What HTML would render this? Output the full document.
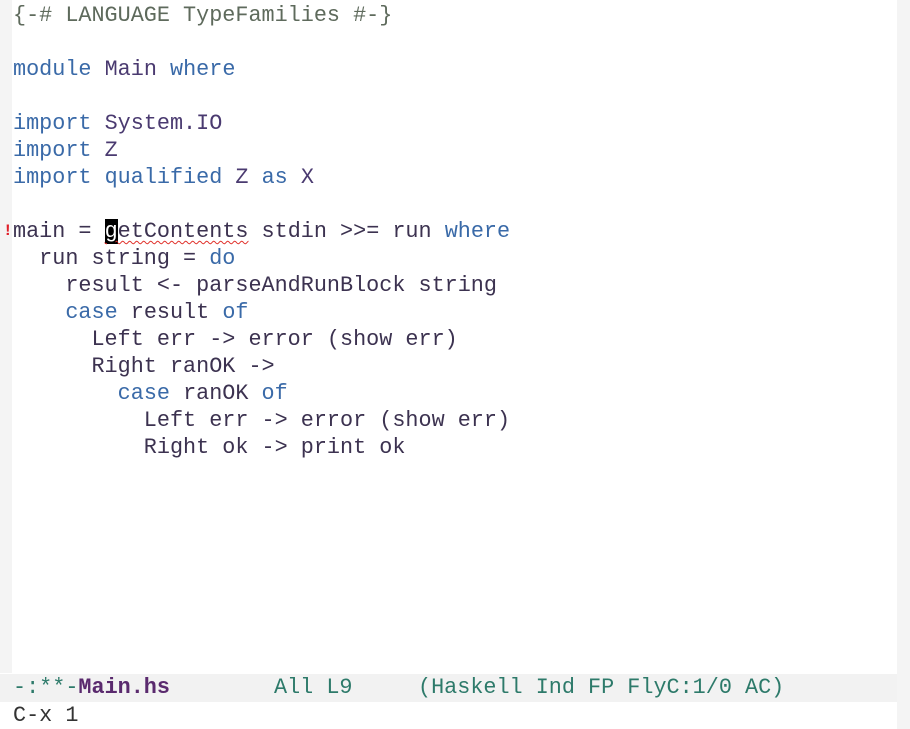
<!DOCTYPE html>
<html><head><style>
html,body{margin:0;padding:0;width:910px;height:729px;background:#fff;overflow:hidden}
body{position:relative;font-family:"Liberation Mono",monospace;font-size:21.8px;line-height:27px;color:#3c3250}
.fl{position:absolute;top:0;left:0;width:12px;height:673px;background:#f4f4f4}
.fr{position:absolute;top:0;left:897px;width:13px;height:729px;background:#f4f4f4}
pre{margin:0;font:inherit;position:absolute;left:13px;top:2px;white-space:pre}
.k{color:#3a6aa8}.p{color:#5e6a5c}.m{color:#4a3a70}
.cur{background:#000;color:#fff}
.sq{text-decoration:underline wavy #e0302a;text-decoration-thickness:1px;text-underline-offset:3px}
.bang{position:absolute;left:3px;top:218px;color:#e0202a;font-size:16px;font-weight:bold}
.ml{position:absolute;left:0;top:674px;width:897px;height:28px;background:#f2f2f2;color:#2d7a6a;line-height:28px}
.ml span{position:absolute}
.ea{position:absolute;left:13px;top:702px;line-height:27px;color:#333}
</style></head><body>
<div class="fl"></div><div class="fr"></div>
<div class="bang">!</div>
<pre><span class="p">{-# LANGUAGE TypeFamilies #-}</span>

<span class="k">module</span> <span class="m">Main</span> <span class="k">where</span>

<span class="k">import</span> <span class="m">System.IO</span>
<span class="k">import</span> <span class="m">Z</span>
<span class="k">import</span> <span class="k">qualified</span> <span class="m">Z</span> <span class="k">as</span> <span class="m">X</span>

main = <span class="sq"><span class="cur">g</span>etContents</span> stdin &gt;&gt;= run <span class="k">where</span>
  run string = <span class="k">do</span>
    result &lt;- parseAndRunBlock string
    <span class="k">case</span> result <span class="k">of</span>
      Left err -&gt; error (show err)
      Right ranOK -&gt;
        <span class="k">case</span> ranOK <span class="k">of</span>
          Left err -&gt; error (show err)
          Right ok -&gt; print ok
</pre>
<div class="ml"><span style="left:13px">-:**-<b style="color:#5a2a6e">Main.hs</b></span><span style="left:274px">All L9</span><span style="left:418px">(Haskell Ind FP FlyC:1/0 AC)</span></div>
<div class="ea">C-x 1</div>
</body></html>
